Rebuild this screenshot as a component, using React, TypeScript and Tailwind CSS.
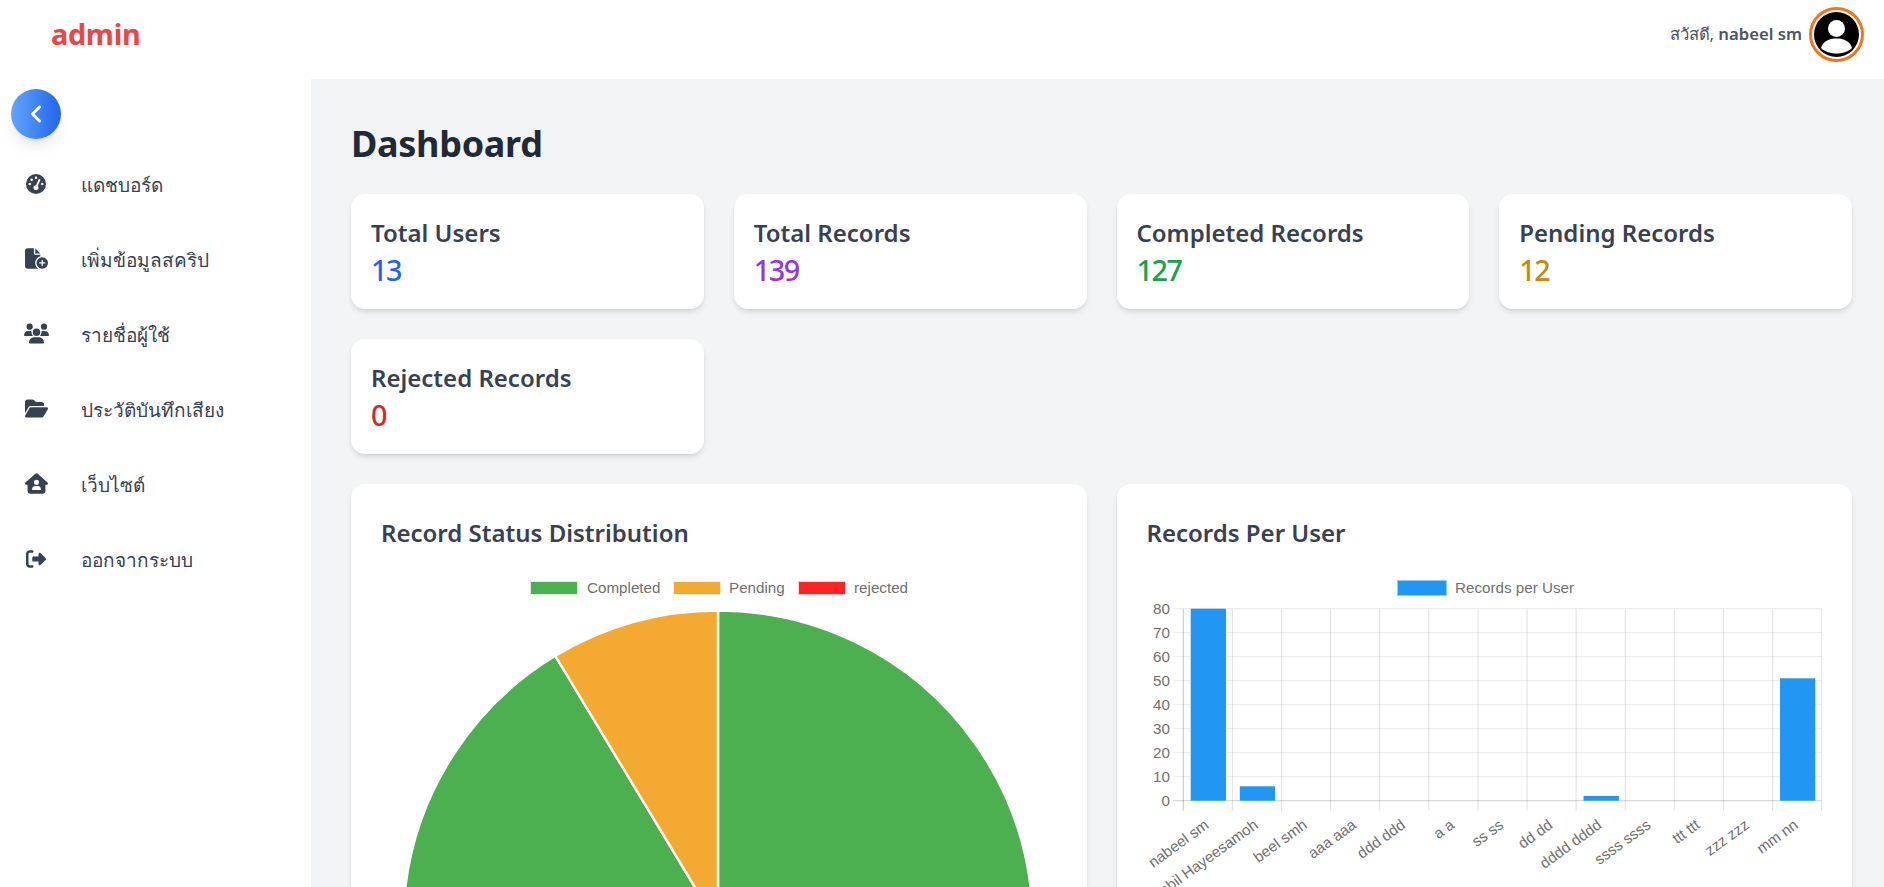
import { ChevronLeft } from "lucide-react";
import { FaFileCirclePlus, FaFolderOpen, FaGaugeHigh, FaHouseUser, FaRightFromBracket, FaUsers } from "react-icons/fa6";

const menu = [
  { label: "แดชบอร์ด", icon: FaGaugeHigh, size: 20 },
  { label: "เพิ่มข้อมูลสคริป", icon: FaFileCirclePlus, size: 23 },
  { label: "รายชื่อผู้ใช้", icon: FaUsers, size: 25 },
  { label: "ประวัติบันทึกเสียง", icon: FaFolderOpen, size: 23 },
  { label: "เว็บไซต์", icon: FaHouseUser, size: 23 },
  { label: "ออกจากระบบ", icon: FaRightFromBracket, size: 20 },
];

const stats = [
  { title: "Total Users", value: 13, color: "text-[#2563eb]" },
  { title: "Total Records", value: 139, color: "text-[#9333ea]" },
  { title: "Completed Records", value: 127, color: "text-[#16a34a]" },
  { title: "Pending Records", value: 12, color: "text-[#ca8a04]" },
  { title: "Rejected Records", value: 0, color: "text-[#dc2626]" },
];

const users = [
  { name: "nabeel sm", count: 80 },
  { name: "nabil Hayeesamoh", count: 6 },
  { name: "beel smh", count: 0 },
  { name: "aaa aaa", count: 0 },
  { name: "ddd ddd", count: 0 },
  { name: "a a", count: 0 },
  { name: "ss ss", count: 0 },
  { name: "dd dd", count: 0 },
  { name: "dddd dddd", count: 2 },
  { name: "ssss ssss", count: 0 },
  { name: "ttt ttt", count: 0 },
  { name: "zzz zzz", count: 0 },
  { name: "mm nn", count: 51 },
];

const chartFont = "'Liberation Sans', Arial, sans-serif";

function PieChart() {
  return (
    <svg width="676" height="670" className="block" fontFamily={chartFont} fontSize="15.2" fill="#707070">
      <rect x="149.5" y="12.5" width="47" height="13" fill="#4caf50" stroke="#dbefdc" />
      <text x="206" y="24">Completed</text>
      <rect x="292.5" y="12.5" width="47" height="13" fill="#f4aa32" stroke="#fdeed6" />
      <text x="348" y="24">Pending</text>
      <rect x="417.5" y="12.5" width="47" height="13" fill="#ff2424" stroke="#ffd3d3" />
      <text x="473" y="24">rejected</text>
      <path d="M337 356.5 L337 41.5 A315 315 0 1 1 174.3 86.8 Z" fill="#4caf50" stroke="#fff" strokeWidth="2.4" />
      <path d="M337 356.5 L174.3 86.8 A315 315 0 0 1 337 41.5 Z" fill="#f4aa32" stroke="#fff" strokeWidth="2.4" />
    </svg>
  );
}

function BarChart() {
  const left = 36.3;
  const right = 674.7;
  const zero = 230.7;
  const step = (right - left) / users.length;
  const ticks = [0, 10, 20, 30, 40, 50, 60, 70, 80];
  return (
    <svg width="675" height="317" className="block overflow-hidden" fontFamily={chartFont} fontSize="15.2" fill="#707070">
      <rect x="250.5" y="10.5" width="49" height="15" fill="#2196f3" stroke="#90cbf9" />
      <text x="308" y="23">Records per User</text>
      {ticks.map((t) => (
        <g key={t}>
          <line x1="26" x2={right} y1={zero - t * 2.4} y2={zero - t * 2.4} stroke="#000" strokeOpacity={t === 0 ? 0.15 : 0.07} strokeWidth="1.2" />
          <text x="23" y={zero - t * 2.4 + 5} textAnchor="end">{t}</text>
        </g>
      ))}
      {users.map((u, i) => (
        <line key={u.name} x1={left + i * step} x2={left + i * step} y1="38.7" y2="240.7" stroke="#000" strokeOpacity={i === 0 ? 0.2 : 0.1} strokeWidth="1.2" />
      ))}
      <line x1={right} x2={right} y1="38.7" y2="240.7" stroke="#000" strokeOpacity="0.1" strokeWidth="1.2" />
      {users.map((u, i) => (
        <rect key={u.name} x={left + i * step + 7.4} y={zero - u.count * 2.4} width="35.3" height={u.count * 2.4} fill="#2196f3" />
      ))}
      {users.map((u, i) => {
        const x = left + (i + 0.5) * step + 2;
        return (
          <text key={u.name} x={x} y="257" textAnchor="end" transform={`rotate(-36 ${x} 257)`}>
            {u.name}
          </text>
        );
      })}
    </svg>
  );
}

export default function App() {
  return (
    <div className="h-screen overflow-hidden bg-[#f3f4f6] flex flex-col font-['Noto_Sans','Open_Sans',sans-serif]">
      <header className="h-[79px] shrink-0 bg-white flex items-center justify-between pl-[51px] pr-5 pb-[11px]">
        <span className="text-[28.8px] font-bold text-[#ef4444] tracking-[-0.3px]">admin</span>
        <div className="flex items-center gap-[7px]">
          <span className="text-[16.7px] text-[#4b5563]">
            สวัสดี, <b className="font-semibold">nabeel sm</b>
          </span>
          <div className="w-[55px] h-[55px] rounded-full border-[3px] border-[#f97316] p-[2px] bg-white">
            <div className="w-full h-full rounded-full bg-black flex items-center justify-center overflow-hidden">
              <svg viewBox="0 0 45 45" className="w-[45px] h-[45px]" fill="#fff">
                <circle cx="22.5" cy="16.5" r="8.5" />
                <path d="M7 36 C9 29 15 26.5 22.5 26.5 C30 26.5 36 29 38 36 C34 40 28 41.5 22.5 41.5 C17 41.5 11 40 7 36 Z" />
              </svg>
            </div>
          </div>
        </div>
      </header>

      <div className="flex flex-1 min-h-0">
        <aside className="w-[311px] shrink-0 bg-white pl-[11px] pt-[10px]">
          <button className="w-[50px] h-[50px] rounded-full bg-gradient-to-r from-[#60a5fa] to-[#2563eb] text-white flex items-center justify-center shadow-lg">
            <ChevronLeft size={28} strokeWidth={2.5} />
          </button>
          <nav className="mt-[7px] flex flex-col">
            {menu.map((item) => {
              const Icon = item.icon;
              return (
                <a key={item.label} className="h-[75px] flex items-center text-[#374151]">
                  <span className="w-[50px] flex justify-center">
                    <Icon size={item.size} />
                  </span>
                  <span className="ml-[20px] pt-[3px] text-[19px]">{item.label}</span>
                </a>
              );
            })}
          </nav>
        </aside>

        <main className="flex-1 min-w-0 pl-10 pr-8 pt-[41px]">
          <h1 className="text-[36px] leading-[48px] font-bold text-[#1f2937] tracking-[-0.3px] mb-[26px]">Dashboard</h1>
          <div className="grid grid-cols-4 gap-[30px]">
            {stats.map((s) => (
              <div key={s.title} className="h-[115px] bg-white rounded-[14px] shadow-md px-5 pt-[21px]">
                <h2 className="text-[24px] leading-[36px] font-semibold text-[#374151]">{s.title}</h2>
                <p className={`text-[28.8px] leading-[38px] font-medium tracking-[-1.5px] ${s.color}`}>{s.value}</p>
              </div>
            ))}
          </div>
          <div className="grid grid-cols-2 gap-[30px] mt-[30px]">
            <div className="bg-white rounded-[14px] shadow-md px-[30px] pt-[31px] pb-8">
              <h2 className="text-[24px] leading-[36px] font-semibold text-[#374151] mb-[18px]">Record Status Distribution</h2>
              <PieChart />
            </div>
            <div className="bg-white rounded-[14px] shadow-md px-[30px] pt-[31px] pb-8">
              <h2 className="text-[24px] leading-[36px] font-semibold text-[#374151] mb-[19px]">Records Per User</h2>
              <BarChart />
            </div>
          </div>
        </main>
      </div>
    </div>
  );
}
